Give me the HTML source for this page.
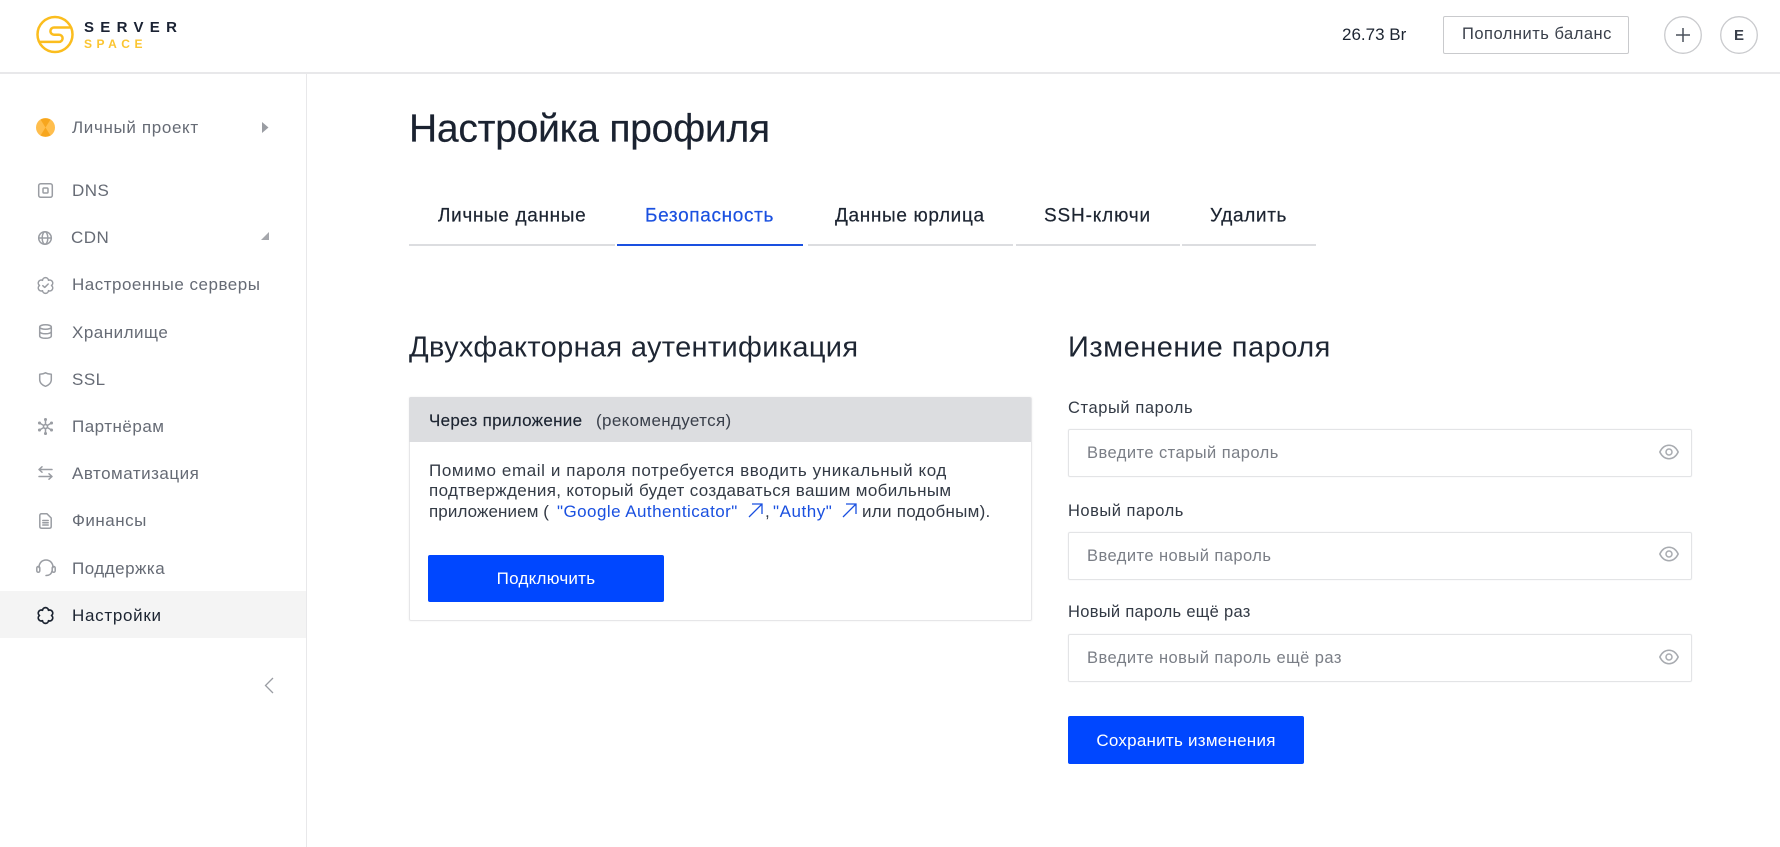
<!DOCTYPE html>
<html lang="ru"><head><meta charset="utf-8"><title>Настройка профиля</title>
<style>
html,body{margin:0;padding:0;width:1780px;height:847px;overflow:hidden;background:#fff;font-family:"Liberation Sans","Noto Sans CJK SC",sans-serif;color:#1c2431}
.a{position:absolute;white-space:nowrap}
.t{position:absolute;white-space:nowrap;transform:translateY(-50%);line-height:1.2}
.n{font-size:17px;color:#666b75;left:72px;letter-spacing:.5px}
.b{position:absolute;background:#dcdde0;height:2px;top:244px}
.tab{font-size:19px;color:#1c2431;top:217px;letter-spacing:.65px;-webkit-text-stroke:.2px currentColor}
.lab{font-size:16.5px;left:1068px;color:#333a45;letter-spacing:.58px}
.inp{position:absolute;left:1068px;width:622px;height:46px;border:1px solid #e3e4e6;border-radius:2px;box-shadow:0 0 1px #e3e4e6}
.ph{font-size:16.5px;left:1087px;color:#7a7e86;letter-spacing:.45px}
.btn{position:absolute;background:#0047ff;border-radius:2px;color:#fff;display:flex;align-items:center;justify-content:center;font-size:17px;letter-spacing:.25px;padding-top:1px;box-sizing:border-box}
svg{position:absolute;overflow:visible}
.ic{fill:none;stroke:#9a9da3;stroke-width:1.5;stroke-linecap:round;stroke-linejoin:round}
.p{font-size:17px;color:#333a45}
a{color:#1a50e0;text-decoration:none}
</style></head><body>
<!-- lines -->
<div class="a" style="left:0;top:72px;width:1780px;height:1.5px;background:#e8e8ea"></div>
<div class="a" style="left:305.5px;top:73px;width:1.5px;height:774px;background:#e8e8ea"></div>
<div class="a" style="left:0;top:591px;width:305.5px;height:47px;background:#f4f4f4"></div>

<!-- logo -->
<svg style="left:0;top:0" width="200" height="70" fill="none"><circle cx="55" cy="34.5" r="17.5" stroke="#fbbd1e" stroke-width="2.5"/><path d="M71 27.5H54a3.6 3.6 0 0 0 0 7.2h5a3.6 3.6 0 0 1 0 7.2H38.500" stroke="#fbbd1e" stroke-width="2.5"/></svg>
<div class="t" style="left:84px;top:28px;font-size:15px;font-weight:700;letter-spacing:6.300px;color:#1a2233">SERVER</div>
<div class="t" style="left:84px;top:44px;font-size:12px;font-weight:700;letter-spacing:4.500px;color:#fbc531">SPACE</div>

<!-- top right -->
<div class="t" style="left:1342px;top:34.500px;font-size:17px;color:#1c2431">26.73 Br</div>
<div class="a" style="left:1443px;top:16px;width:184px;height:36px;border:1.500px solid #c9cacd;border-radius:2px"></div>
<div class="t" style="left:1462px;top:34.500px;font-size:16.500px;color:#3a404b;letter-spacing:.5px">Пополнить баланс</div>
<svg style="left:1664px;top:16px" width="38" height="38" fill="none"><circle cx="19" cy="19" r="18.300" stroke="#c9cacd" stroke-width="1.300"/><path d="M19 12v14M12 19h14" stroke="#4a505b" stroke-width="1.500"/></svg>
<svg style="left:1720px;top:16px" width="38" height="38" fill="none"><circle cx="19" cy="19" r="18.300" stroke="#c9cacd" stroke-width="1.300"/></svg>
<div class="t" style="left:1734px;top:35.500px;font-size:15px;font-weight:700;color:#3a404b">E</div>

<!-- sidebar -->
<svg style="left:36px;top:118px" width="19" height="19"><circle cx="9.500" cy="9.500" r="9.500" fill="#ffbe4d"/><path d="M4.500 1.500Q9.500 -.5 14.500 1.500L9.500 9.500ZM4.500 17.500Q9.500 19.500 14.500 17.500L9.500 9.500Z" fill="#f7a61e"/></svg>
<div class="t n" style="top:128px;letter-spacing:.65px">Личный проект</div>
<svg style="left:262px;top:121px" width="7" height="13"><path d="M0 1 6.500 6.500 0 12z" fill="#9a9da3"/></svg>

<svg class="ic" style="left:38px;top:183px" width="15" height="15"><rect x=".7" y=".7" width="13.600" height="13.600" rx="2"/><rect x="5" y="5" width="5" height="5" rx="1"/></svg>
<div class="t n" style="top:190.500px">DNS</div>

<svg class="ic" style="left:38px;top:231px" width="14" height="14"><circle cx="7" cy="7" r="6.300"/><ellipse cx="7" cy="7" rx="2.800" ry="6.300"/><path d="M.7 7h12.600"/></svg>
<div class="t n" style="top:238px;left:71px">CDN</div>
<svg style="left:261px;top:232px" width="8" height="8"><path d="M8 0V8H0z" fill="#a5a7ac"/></svg>

<svg class="ic" style="left:37px;top:276.500px" width="17" height="17"><path d="M14.500 8.500A3.020 3.020 0 0 1 11.500 13.700A3.020 3.020 0 0 1 5.500 13.700A3.020 3.020 0 0 1 2.500 8.500A3.020 3.020 0 0 1 5.500 3.300A3.020 3.020 0 0 1 11.500 3.300A3.020 3.020 0 0 1 14.500 8.500z"/><path d="M5.800 8.700 7.700 10.400 11.200 7"/></svg>
<div class="t n" style="top:285px">Настроенные серверы</div>

<svg class="ic" style="left:39px;top:324px" width="13" height="15"><ellipse cx="6.500" cy="3" rx="5.800" ry="2.300"/><path d="M.7 3v9c0 1.300 2.600 2.300 5.800 2.300s5.800-1 5.800-2.300V3M.7 7.500c0 1.300 2.600 2.300 5.800 2.300s5.800-1 5.800-2.300"/></svg>
<div class="t n" style="top:332.500px">Хранилище</div>

<svg class="ic" style="left:39px;top:372px" width="13" height="15"><path d="M.7 2.300C2.500 2.300 4.700 1.800 6.500.8 8.300 1.800 10.500 2.300 12.300 2.300V7.500C12.300 11 9.500 13.500 6.500 14.300 3.500 13.500.7 11 .7 7.500z"/></svg>
<div class="t n" style="top:379.500px">SSL</div>

<svg class="ic" style="left:37px;top:418px" width="17" height="17"><circle cx="8.500" cy="8.500" r="2"/><path d="M8.500 1.500V6.500M8.500 10.500V15.500M2.500 5 6.800 7.500M10.200 9.500 14.500 12M14.500 5 10.200 7.500M6.800 9.500 2.500 12"/><g fill="#9a9da3"><circle cx="8.500" cy="1.500" r=".8"/><circle cx="8.500" cy="15.500" r=".8"/><circle cx="2.500" cy="5" r=".8"/><circle cx="14.500" cy="5" r=".8"/><circle cx="2.500" cy="12" r=".8"/><circle cx="14.500" cy="12" r=".8"/></g></svg>
<div class="t n" style="top:426.500px">Партнёрам</div>

<svg class="ic" style="left:38px;top:466px" width="15" height="14"><path d="M14 3.500H1M4 .8 1 3.500 4 6.200M1 10.500H14M11 7.800 14 10.500 11 13.200"/></svg>
<div class="t n" style="top:474px">Автоматизация</div>

<svg class="ic" style="left:39px;top:513px" width="13" height="16"><path d="M8 .8H2.500Q.8.800.8 2.500V13.500Q.8 15.200 2.500 15.200H10.500Q12.200 15.200 12.200 13.500V5zM3.800 7.500H9.200M3.800 9.800H9.200M3.800 12H9.200"/></svg>
<div class="t n" style="top:521px">Финансы</div>

<svg class="ic" style="left:36px;top:559px" width="20" height="18"><path d="M3 8.500C3 4 6 1 10 1s7 3 7 7.500M10 16.500C13 16.500 15.500 15 16 12"/><rect x=".8" y="7.500" width="3" height="5.800" rx="1.500"/><rect x="16.200" y="7.500" width="3" height="5.800" rx="1.500"/></svg>
<div class="t n" style="top:568.500px">Поддержка</div>

<svg style="left:37px;top:606.500px" width="17" height="17" fill="none" stroke="#1c2431" stroke-width="1.700" stroke-linejoin="round"><path d="M14.500 8.500A3.020 3.020 0 0 1 11.500 13.700A3.020 3.020 0 0 1 5.500 13.700A3.020 3.020 0 0 1 2.500 8.500A3.020 3.020 0 0 1 5.500 3.300A3.020 3.020 0 0 1 11.500 3.300A3.020 3.020 0 0 1 14.500 8.500z"/></svg>
<div class="t n" style="top:615.500px;color:#1c2431;letter-spacing:.7px">Настройки</div>

<svg style="left:263px;top:677px" width="12" height="17" fill="none" stroke="#9a9da3" stroke-width="1.300"><path d="M10 1 2.500 8.500 10 16"/></svg>

<!-- title -->
<div class="t" style="left:409px;top:130px;font-size:39px;color:#1a2230;letter-spacing:-.25px;-webkit-text-stroke:.2px currentColor">Настройка профиля</div>

<!-- tabs -->
<div class="t tab" style="left:438px">Личные данные</div>
<div class="t tab" style="left:645px;color:#1a50e0">Безопасность</div>
<div class="t tab" style="left:835px">Данные юрлица</div>
<div class="t tab" style="left:1044px;letter-spacing:.85px">SSH-ключи</div>
<div class="t tab" style="left:1210px">Удалить</div>
<div class="b" style="left:409px;width:206px"></div>
<div class="b" style="left:617px;width:186px;background:#1a50e0;top:243.500px;height:2.500px"></div>
<div class="b" style="left:808px;width:205px"></div>
<div class="b" style="left:1016px;width:164px"></div>
<div class="b" style="left:1182px;width:134px"></div>

<!-- headings -->
<div class="t" style="left:409px;top:348px;font-size:29px;color:#1e2633;letter-spacing:.33px">Двухфакторная аутентификация</div>
<div class="t" style="left:1068px;top:348px;font-size:29px;color:#1e2633;letter-spacing:.5px">Изменение пароля</div>

<!-- card -->
<div class="a" style="left:409px;top:397px;width:621px;height:222px;border:1px solid #e6e6e8;border-radius:2px;box-shadow:0 0 2px #eee"></div>
<div class="a" style="left:409px;top:397px;width:622px;height:45px;background:#dcdde0;border-radius:2px 2px 0 0"></div>
<div class="t" style="left:429px;top:421px;font-size:17px;color:#1c2431;letter-spacing:.3px;-webkit-text-stroke:.15px currentColor">Через приложение</div>
<div class="t" style="left:596px;top:421px;font-size:17px;color:#3a404b;letter-spacing:.35px">(рекомендуется)</div>
<div class="t p" style="left:429px;top:471px;letter-spacing:.6px">Помимо email и пароля потребуется вводить уникальный код</div>
<div class="t p" style="left:429px;top:491px;letter-spacing:.36px">подтверждения, который будет создаваться вашим мобильным</div>
<div class="t p" style="left:429px;top:512px;letter-spacing:.1px">приложением (</div>
<div class="t p" style="left:557px;top:512px;letter-spacing:.45px"><a>"Google Authenticator"</a></div>
<svg style="left:748px;top:503px" width="15" height="15" fill="none" stroke="#1a50e0" stroke-width="1.300"><path d="M1 14 14 1M4 1H14V11"/></svg>
<div class="t p" style="left:765px;top:512px">,</div>
<div class="t p" style="left:773px;top:512px;letter-spacing:.55px"><a>"Authy"</a></div>
<svg style="left:842px;top:503px" width="15" height="15" fill="none" stroke="#1a50e0" stroke-width="1.300"><path d="M1 14 14 1M4 1H14V11"/></svg>
<div class="t p" style="left:862px;top:512px;letter-spacing:.27px">или подобным).</div>
<div class="btn" style="left:428px;top:555px;width:236px;height:47px">Подключить</div>

<!-- form -->
<div class="t lab" style="top:408.500px">Старый пароль</div>
<div class="inp" style="top:429px"></div>
<div class="t ph" style="top:453.500px">Введите старый пароль</div>
<svg class="ic" style="left:1659px;top:444px;stroke:#a8abb0" width="20" height="16"><path d="M.8 8C3 3.500 6 1.300 10 1.300S17 3.500 19.200 8C17 12.500 14 14.700 10 14.700S3 12.500.8 8z"/><circle cx="10" cy="8" r="3"/></svg>

<div class="t lab" style="top:511.500px;letter-spacing:.5px">Новый пароль</div>
<div class="inp" style="top:532px"></div>
<div class="t ph" style="top:556.500px">Введите новый пароль</div>
<svg class="ic" style="left:1659px;top:546px;stroke:#a8abb0" width="20" height="16"><path d="M.8 8C3 3.500 6 1.300 10 1.300S17 3.500 19.200 8C17 12.500 14 14.700 10 14.700S3 12.500.8 8z"/><circle cx="10" cy="8" r="3"/></svg>

<div class="t lab" style="top:612.500px;letter-spacing:.3px">Новый пароль ещё раз</div>
<div class="inp" style="top:634px"></div>
<div class="t ph" style="top:659px">Введите новый пароль ещё раз</div>
<svg class="ic" style="left:1659px;top:649px;stroke:#a8abb0" width="20" height="16"><path d="M.8 8C3 3.500 6 1.300 10 1.300S17 3.500 19.200 8C17 12.500 14 14.700 10 14.700S3 12.500.8 8z"/><circle cx="10" cy="8" r="3"/></svg>

<div class="btn" style="left:1068px;top:716px;width:236px;height:48px">Сохранить изменения</div>
</body></html>
